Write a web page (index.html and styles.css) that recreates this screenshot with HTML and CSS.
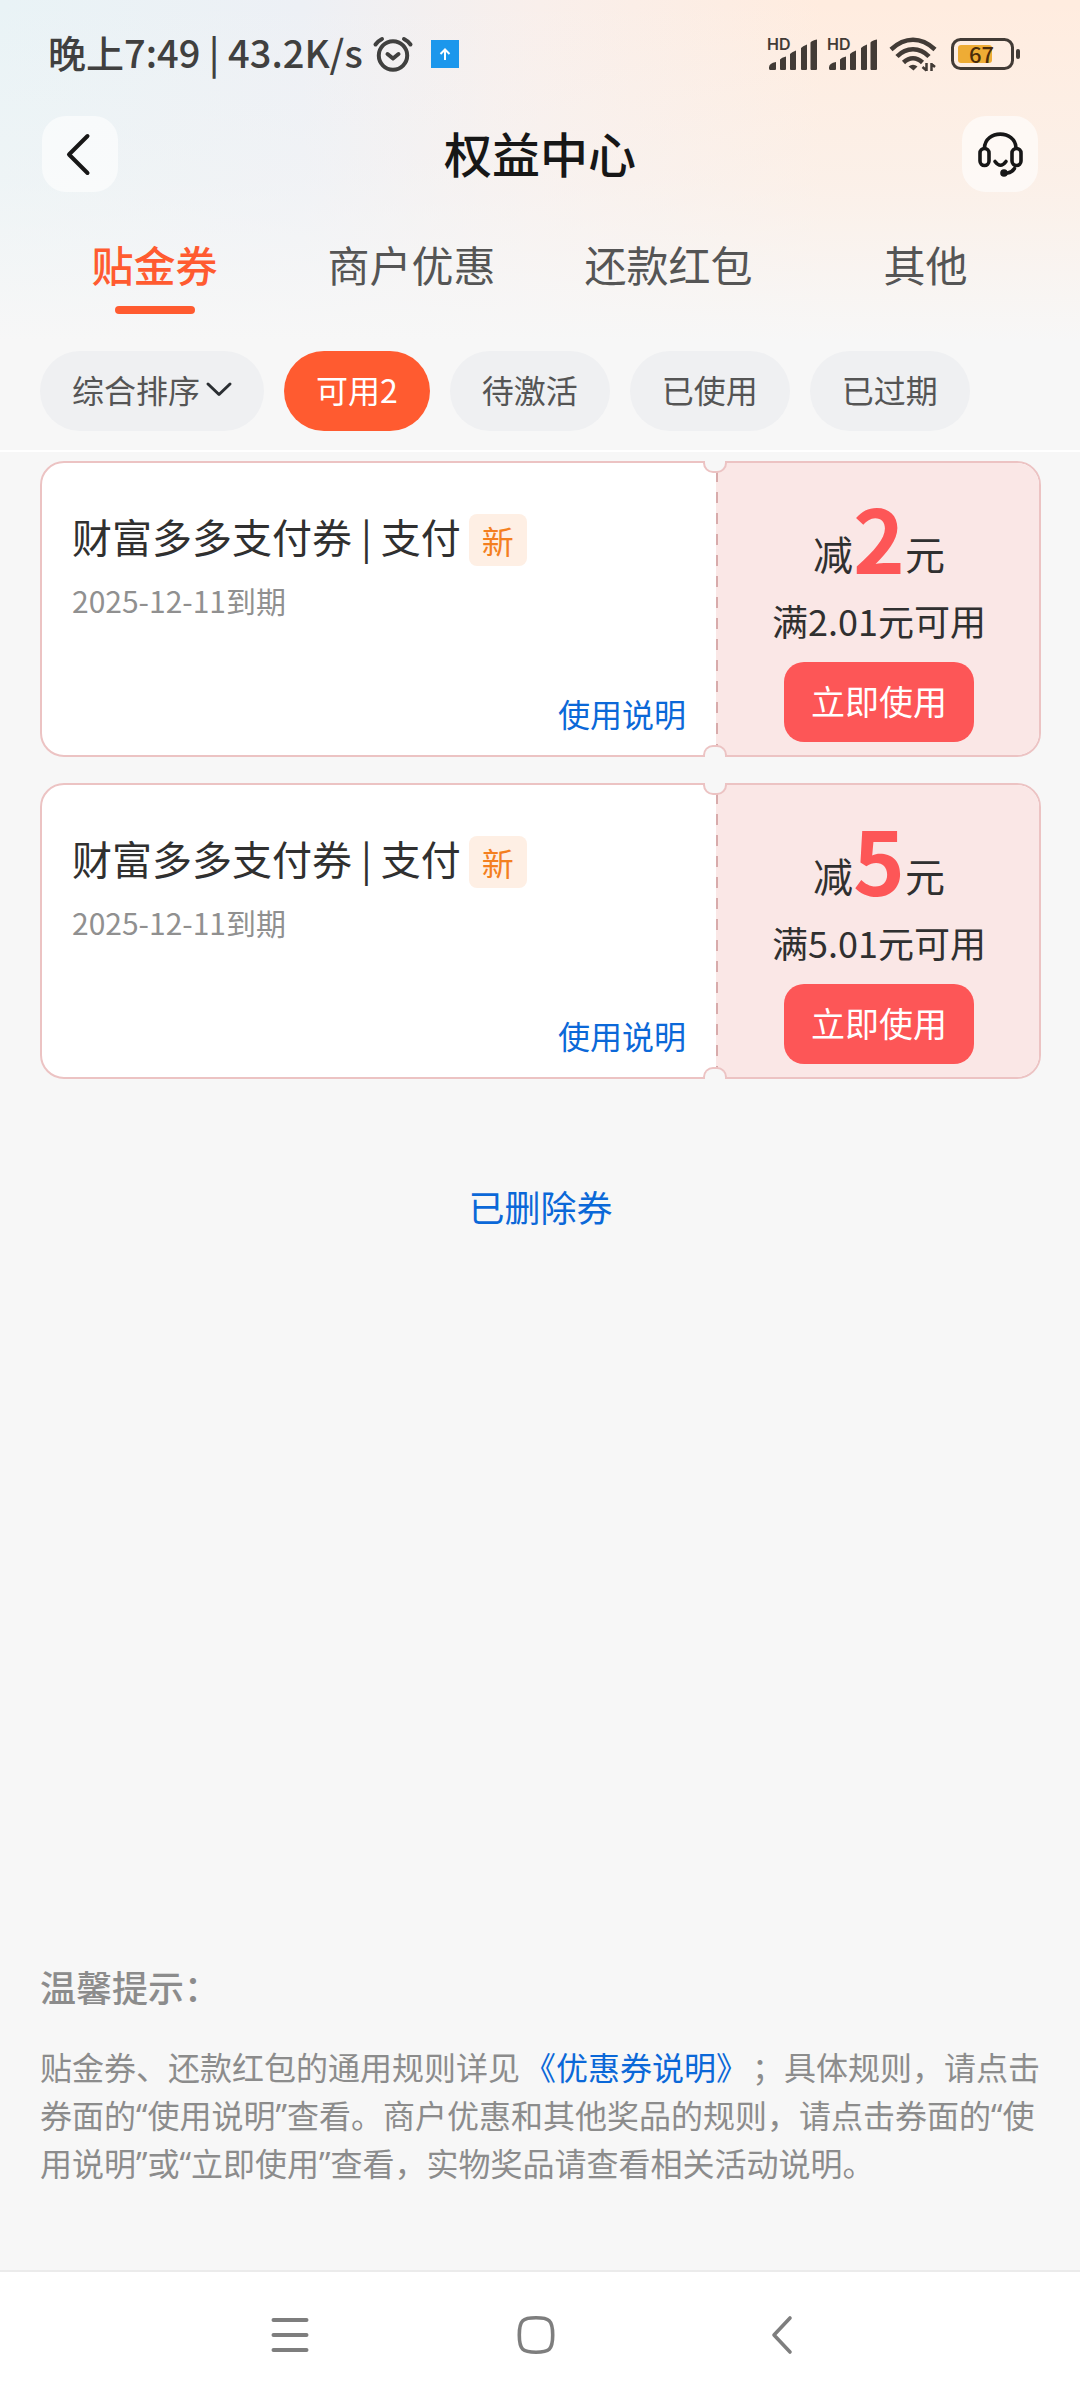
FILE: index.html
```html
<!DOCTYPE html>
<html lang="zh-CN">
<head>
<meta charset="utf-8">
<meta name="viewport" content="width=device-width, initial-scale=1">
<title>权益中心</title>
<link rel="stylesheet" href="styles.css">
</head>
<body>
<div class="page">
  <div class="top">
    <div class="status">
      <div class="status-left">
        <span>晚上7:49 | 43.2K/s</span>
        <svg class="alarm" width="40" height="36" viewBox="0 0 40 36" fill="none" stroke="#40403f" stroke-width="4" stroke-linecap="round" stroke-linejoin="round"><circle cx="20" cy="19.500" r="14.200"/><path d="M14.500 18l5.500 4.500 5.500-4.500M2.500 8.500Q5 5 9 3M37.500 8.500Q35 5 31 3"/></svg>
        <svg width="28" height="28" viewBox="0 0 28 28" fill="none"><rect width="28" height="28" fill="#1c97ec"/><path d="M14 20V10M9.500 14L14 9.500l4.500 4.500" stroke="#fff" stroke-width="2"/></svg>
      </div>
      <div class="status-right">
        <svg width="51" height="36" viewBox="0 0 51 36" fill="#423b36"><text class="hd" x="0" y="14">HD</text><path d="M2 31.500Q2 27 9 26v7q0 1-1 1H3.500Q2 34 2 32.500zM13 23.500q1.500-2 6-3V33q0 1-1 1h-4q-1 0-1-1zM23 18q1.500-2 6-3.500V33q0 1-1 1h-4q-1 0-1-1zM34 12q1.500-2 6-3.500V33q0 1-1 1h-4q-1 0-1-1zM43.500 6.500q1.500-2 6.500-3V33q0 1-1 1h-4.500q-1 0-1-1z"/></svg>
        <svg width="51" height="36" viewBox="0 0 51 36" fill="#423b36"><text class="hd" x="0" y="14">HD</text><path d="M2 31.500Q2 27 9 26v7q0 1-1 1H3.500Q2 34 2 32.500zM13 23.500q1.500-2 6-3V33q0 1-1 1h-4q-1 0-1-1zM23 18q1.500-2 6-3.500V33q0 1-1 1h-4q-1 0-1-1zM34 12q1.500-2 6-3.500V33q0 1-1 1h-4q-1 0-1-1zM43.500 6.500q1.500-2 6.500-3V33q0 1-1 1h-4.500q-1 0-1-1z"/></svg>
        <svg class="wifi" width="48" height="36" viewBox="0 0 48 36" fill="none" stroke="#423b36" stroke-width="4.500"><path d="M2 13.500Q12.500 3.800 24 3.800T46 13.500M8 20.500Q15 13.200 24 13.200T40 20.500M14.500 26.500Q19 22.200 24 22.200T33.500 26.500"/><path d="M19.500 30.500q4.500-3.500 9 0L24.500 34.500z" fill="#423b36" stroke="none"/><path d="M37.500 27v8M42.500 27v8M37.500 34.500l-4-3.500M42.500 28l3.500 3" stroke-width="2.500"/></svg>
        <svg width="70" height="32" viewBox="0 0 70 32"><rect x="1.500" y="1.500" width="60" height="29" rx="8" fill="none" stroke="#423b36" stroke-width="3"/><rect x="7" y="7" width="34" height="18" rx="3" fill="#eeac35"/><rect x="65" y="11" width="4" height="10" rx="2" fill="#423b36"/><text class="charge" x="18" y="25">67</text></svg>
      </div>
    </div>
    <header class="header">
      <button class="square" aria-label="返回"><svg width="76" height="76" viewBox="0 0 76 76" fill="none" stroke="#171717" stroke-width="4" stroke-linecap="round" stroke-linejoin="round"><path d="M45.500 20L27 38.500 45.500 57"/></svg></button>
      <h1>权益中心</h1>
      <button class="square" aria-label="客服"><svg width="76" height="76" viewBox="0 0 76 76" fill="none" stroke="#171717" stroke-width="3.600" stroke-linecap="round" stroke-linejoin="round"><path d="M22.500 32C23 13.500 53.500 13.500 54 32"/><rect x="18" y="32.500" width="9" height="17" rx="4.500"/><rect x="50" y="32.500" width="9" height="17" rx="4.500"/><path d="M33 45.500q5.500 7.500 11 0M52.500 52.500q-2.500 3.800-7 4.500"/><circle cx="42" cy="57" r="2" fill="#171717"/></svg></button>
    </header>
    <nav class="tabs">
      <a class="tab current" href="#">贴金券</a>
      <a class="tab" href="#">商户优惠</a>
      <a class="tab" href="#">还款红包</a>
      <a class="tab" href="#">其他</a>
    </nav>
    <div class="filters">
      <button class="pill">综合排序<svg class="caret" width="26" height="16" viewBox="0 0 26 16" fill="none" stroke="#2b2f33" stroke-width="3" stroke-linecap="round" stroke-linejoin="round"><path d="M2 3l11 10.500L24 3"/></svg></button>
      <button class="pill chosen">可用2</button>
      <button class="pill">待激活</button>
      <button class="pill">已使用</button>
      <button class="pill">已过期</button>
    </div>
  </div>
  <main class="content">
    <article class="coupon">
      <div class="info">
        <div class="name"><h2>财富多多支付券 | 支付</h2><span class="tag">新</span></div>
        <p class="date">2025-12-11到期</p>
        <a class="explain" href="#">使用说明</a>
      </div>
      <div class="offer">
        <p class="amount">减<strong>2</strong>元</p>
        <p class="limit">满2.01元可用</p>
        <button class="use">立即使用</button>
      </div>
    </article>
    <article class="coupon">
      <div class="info">
        <div class="name"><h2>财富多多支付券 | 支付</h2><span class="tag">新</span></div>
        <p class="date">2025-12-11到期</p>
        <a class="explain" href="#">使用说明</a>
      </div>
      <div class="offer">
        <p class="amount">减<strong>5</strong>元</p>
        <p class="limit">满5.01元可用</p>
        <button class="use">立即使用</button>
      </div>
    </article>
    <a class="deleted" href="#">已删除券</a>
    <section class="tips">
      <h3>温馨提示：</h3>
      <p>贴金券、还款红包的通用规则详见<a href="#">《优惠券说明》</a>；具体规则，请点击券面的“使用说明”查看。商户优惠和其他奖品的规则，请点击券面的“使用说明”或“立即使用”查看，实物奖品请查看相关活动说明。</p>
    </section>
  </main>
  <nav class="system">
    <button aria-label="最近任务"><svg width="40" height="40" viewBox="0 0 40 40" fill="none" stroke="#7e7e7e" stroke-width="4" stroke-linecap="round"><path d="M3.500 5h33M3.500 20h33M3.500 35h33"/></svg></button>
    <button aria-label="主屏幕"><svg width="40" height="40" viewBox="0 0 40 40" fill="none" stroke="#7e7e7e" stroke-width="3.600"><path d="M20 2.800C33 2.800 36.700 5 36.700 20S33 37.200 20 37.200 3.300 35 3.300 20 7 2.800 20 2.800z"/></svg></button>
    <button aria-label="返回上一页"><svg width="40" height="40" viewBox="0 0 40 40" fill="none" stroke="#7e7e7e" stroke-width="3.600" stroke-linecap="round" stroke-linejoin="round"><path d="M28 3L12 20l16 17"/></svg></button>
  </nav>
</div>
</body>
</html>
```
FILE: styles.css
```css
* { box-sizing: border-box; }
body, h1, h2, h3, p { margin: 0; }
body {
  background: #f7f7f7;
  color: #303030;
  font-family: "Noto Sans CJK SC", sans-serif;
  font-size: 32px;
}
button {
  border: 0;
  padding: 0;
  background: none;
  color: inherit;
  font: inherit;
}
a { color: #0b68d8; text-decoration: none; }
svg { display: block; flex: none; overflow: visible; }

.page {
  min-height: 100vh;
  display: flex;
  flex-direction: column;
}

/* Header area with its pale wash */
.top {
  border-bottom: 2px solid #fff;
  background:
    linear-gradient(to bottom, rgba(246, 246, 246, 0) 0, rgba(246, 246, 246, 0.4) 40%, #f7f7f7 76%),
    linear-gradient(to right, #e9f3f6 0, #edf0f5 28%, #f9efeb 50%, #ffecdf 76%, #ffecdf 100%);
}
.status {
  height: 116px;
  padding: 0 59px 8px 48px;
  display: flex;
  align-items: center;
  justify-content: space-between;
}
.status-left {
  display: flex;
  align-items: center;
  color: #40403f;
  font-size: 38px;
  font-weight: 500;
}
.status-left span { padding-bottom: 4px; line-height: 48px; }
.alarm { margin: 0 18px 0 10px; }
.status-right { display: flex; align-items: center; gap: 9px; }
.wifi { margin: 0 5px 0 2px; }
.hd { font: 600 16px Inter, sans-serif; }
.charge { font: 500 22px "Noto Sans CJK SC", sans-serif; fill: #4a2b0a; }

.header {
  padding: 0 42px;
  display: flex;
  align-items: center;
  justify-content: space-between;
}
.header h1 { padding-bottom: 4px; color: #171717; font-size: 48px; font-weight: 500; line-height: 72px; }
.square { border-radius: 24px; background: rgba(255, 255, 255, 0.6); }

.tabs {
  padding: 36px 26px 0;
  display: grid;
  grid-template-columns: repeat(4, 1fr);
}
.tab {
  display: flex;
  flex-direction: column;
  align-items: center;
  height: 86px;
  color: #555;
  font-size: 42px;
  line-height: 72px;
}
.tab.current { color: #ff5b30; font-weight: 500; }
.tab.current::after {
  content: "";
  width: 80px;
  height: 8px;
  margin-top: 6px;
  border-radius: 4px;
  background: #ff5b30;
}

.filters { padding: 37px 40px 19px; display: flex; gap: 20px; }
.pill {
  height: 80px;
  padding: 0 32px 4px;
  border-radius: 40px;
  background: #eff0f2;
  color: #555;
  line-height: 48px;
  display: flex;
  align-items: center;
}
.pill.chosen { background: #ff5b30; color: #fff; }
.caret { margin-left: 6px; }

/* Coupons */
.content {
  flex: 1;
  padding: 9px 39px 82px 40px;
  display: flex;
  flex-direction: column;
}
.coupon {
  position: relative;
  display: flex;
  min-height: 296px;
  margin-bottom: 26px;
  border: 2px solid #ecc3c3;
  border-radius: 24px;
  background: #fff;
}
.coupon::before, .coupon::after {
  content: "";
  position: absolute;
  right: 312px;
  width: 20px;
  height: 10px;
  border: 2px solid #ecc3c3;
  background: #f7f7f7;
}
.coupon::before { top: -2px; border-top: 0; border-radius: 0 0 10px 10px; }
.coupon::after { bottom: -2px; border-bottom: 0; border-radius: 10px 10px 0 0; }
.info {
  flex: 1;
  padding: 49px 30px 18px;
  display: flex;
  flex-direction: column;
  align-items: flex-start;
}
.name { display: flex; align-items: center; gap: 8px; }
.name h2 { padding-bottom: 8px; font-size: 40px; font-weight: 400; line-height: 48px; }
.tag {
  padding: 0 13px;
  border-radius: 8px;
  background: #feefe4;
  color: #f47f1f;
  line-height: 52px;
}
.date { margin-top: 8px; color: #909090; font-size: 30px; line-height: 48px; }
.explain { margin-top: auto; align-self: flex-end; line-height: 48px; }
.offer {
  width: 323px;
  padding: 29px 0 13px 3px;
  border-radius: 0 22px 22px 0;
  background:
    repeating-linear-gradient(to bottom, #d8abab 0 11px, transparent 11px 21px) 0 8px / 2px 100% no-repeat,
    #fae7e6;
  display: flex;
  flex-direction: column;
  align-items: center;
}
.amount { font-size: 40px; line-height: 96px; height: 96px; }
.amount strong {
  color: #fd5657;
  font-size: 88px;
  font-weight: 700;
  line-height: 88px;
  vertical-align: -4px;
}
.limit { margin-top: 8px; font-size: 36px; line-height: 48px; }
.use {
  width: 190px;
  height: 80px;
  margin-top: auto;
  padding-bottom: 2px;
  border-radius: 20px;
  background: #fd5657;
  color: #fff;
  font-size: 34px;
  line-height: 48px;
}
.deleted { margin-top: 77px; align-self: center; font-size: 36px; line-height: 48px; }

/* Hints */
.tips { margin-top: auto; color: #8c8c8c; }
.tips h3 { font-size: 36px; font-weight: 500; line-height: 48px; }
.tips p {
  margin: 34px -4px 0 0;
  font-family: "Noto Sans", "Noto Sans CJK SC", sans-serif;
  line-height: 48px;
  text-spacing-trim: space-all;
}
.tips p a { margin: 0 4px; }

.system {
  padding: 43px 8px 45px 0;
  border-top: 2px solid #ebebeb;
  background: #fff;
  display: grid;
  grid-template-columns: repeat(3, 246px);
  justify-content: center;
}
.system button { display: flex; justify-content: center; }
```
